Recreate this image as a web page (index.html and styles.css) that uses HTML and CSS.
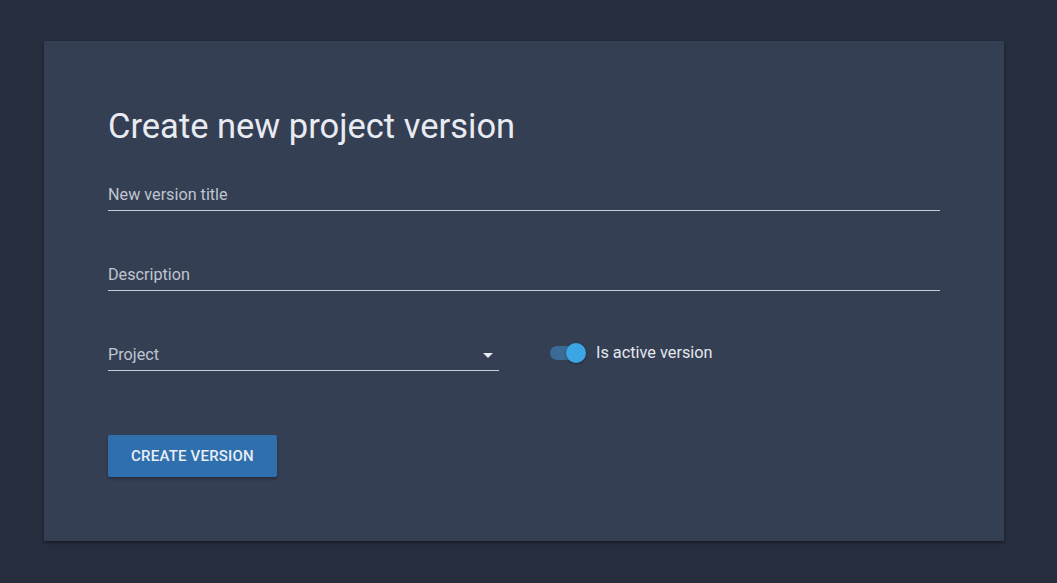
FILE: index.html
```html
<!DOCTYPE html>
<html>
<head>
<meta charset="utf-8">
<link rel="stylesheet" href="styles.css">
</head>
<body>
<div class="page">
  <div class="card">
    <h1 class="title">Create new project version</h1>
    <div class="field full"><span class="label">New version title</span></div>
    <div class="field full"><span class="label">Description</span></div>
    <div class="row">
      <div class="field select"><span class="label">Project</span>
        <svg class="caret" width="10" height="5" viewBox="0 0 10 5"><path d="M0 0 L10 0 L5 5 Z" fill="#e6e9ef"/></svg>
      </div>
      <div class="switch">
        <span class="track"><span class="thumb"></span></span>
        <span class="switch-label">Is active version</span>
      </div>
    </div>
    <button class="btn">Create version</button>
  </div>
</div>
</body>
</html>
```
FILE: styles.css
```css
html, body { margin: 0; padding: 0; }
body {
  background: #262d3d;
  font-family: Roboto, "Noto Sans", sans-serif;
  width: 1057px;
  height: 583px;
  overflow: hidden;
}
.page {
  padding: 41px 53px 0 44px;
}
.card {
  width: 960px;
  height: 500px;
  box-sizing: border-box;
  background: #353f53;
  padding: 65px 64px 0 64px;
  box-shadow: 0 2px 2px rgba(0,0,0,0.25), 0 1px 4px rgba(0,0,0,0.2);
}
.title {
  margin: 0 0 33px 0;
  font-weight: 400;
  font-size: 34.5px;
  line-height: 40px;
  color: #e8ecf2;
}
.field {
  border-bottom: 1px solid #c7ccd6;
  height: 32px;
  box-sizing: border-box;
  display: flex;
  align-items: center;
  width: 832px;
}
.label {
  color: #bfc5d1;
  font-size: 16.2px;
}
.full { margin-bottom: 48px; }
.row {
  display: flex;
  align-items: center;
  gap: 51px;
}
.select {
  width: 391px;
  justify-content: space-between;
  padding-right: 6px;
}
.caret { margin-top: 2px; }
.switch {
  display: flex;
  align-items: center;
  gap: 12px;
  margin-top: -5px;
}
.track {
  position: relative;
  width: 34px;
  height: 14px;
  border-radius: 7px;
  background: #3a6b96;
}
.thumb {
  position: absolute;
  right: -2px;
  top: -3px;
  width: 20px;
  height: 20px;
  border-radius: 50%;
  background: #3ba6e3;
  box-shadow: 0 1px 3px rgba(0,0,0,0.35);
}
.switch-label {
  color: #e3e7ee;
  font-size: 16.3px;
}
.btn {
  margin-top: 64px;
  background: #2f6fae;
  color: #e8eef6;
  border: none;
  border-radius: 2px;
  height: 42px;
  width: 169px;
  font-family: Roboto, sans-serif;
  font-weight: 500;
  font-size: 15px;
  text-transform: uppercase;
  letter-spacing: 0.2px;
  box-shadow: 0 2px 3px rgba(0,0,0,0.3);
  padding: 0;
}
```
